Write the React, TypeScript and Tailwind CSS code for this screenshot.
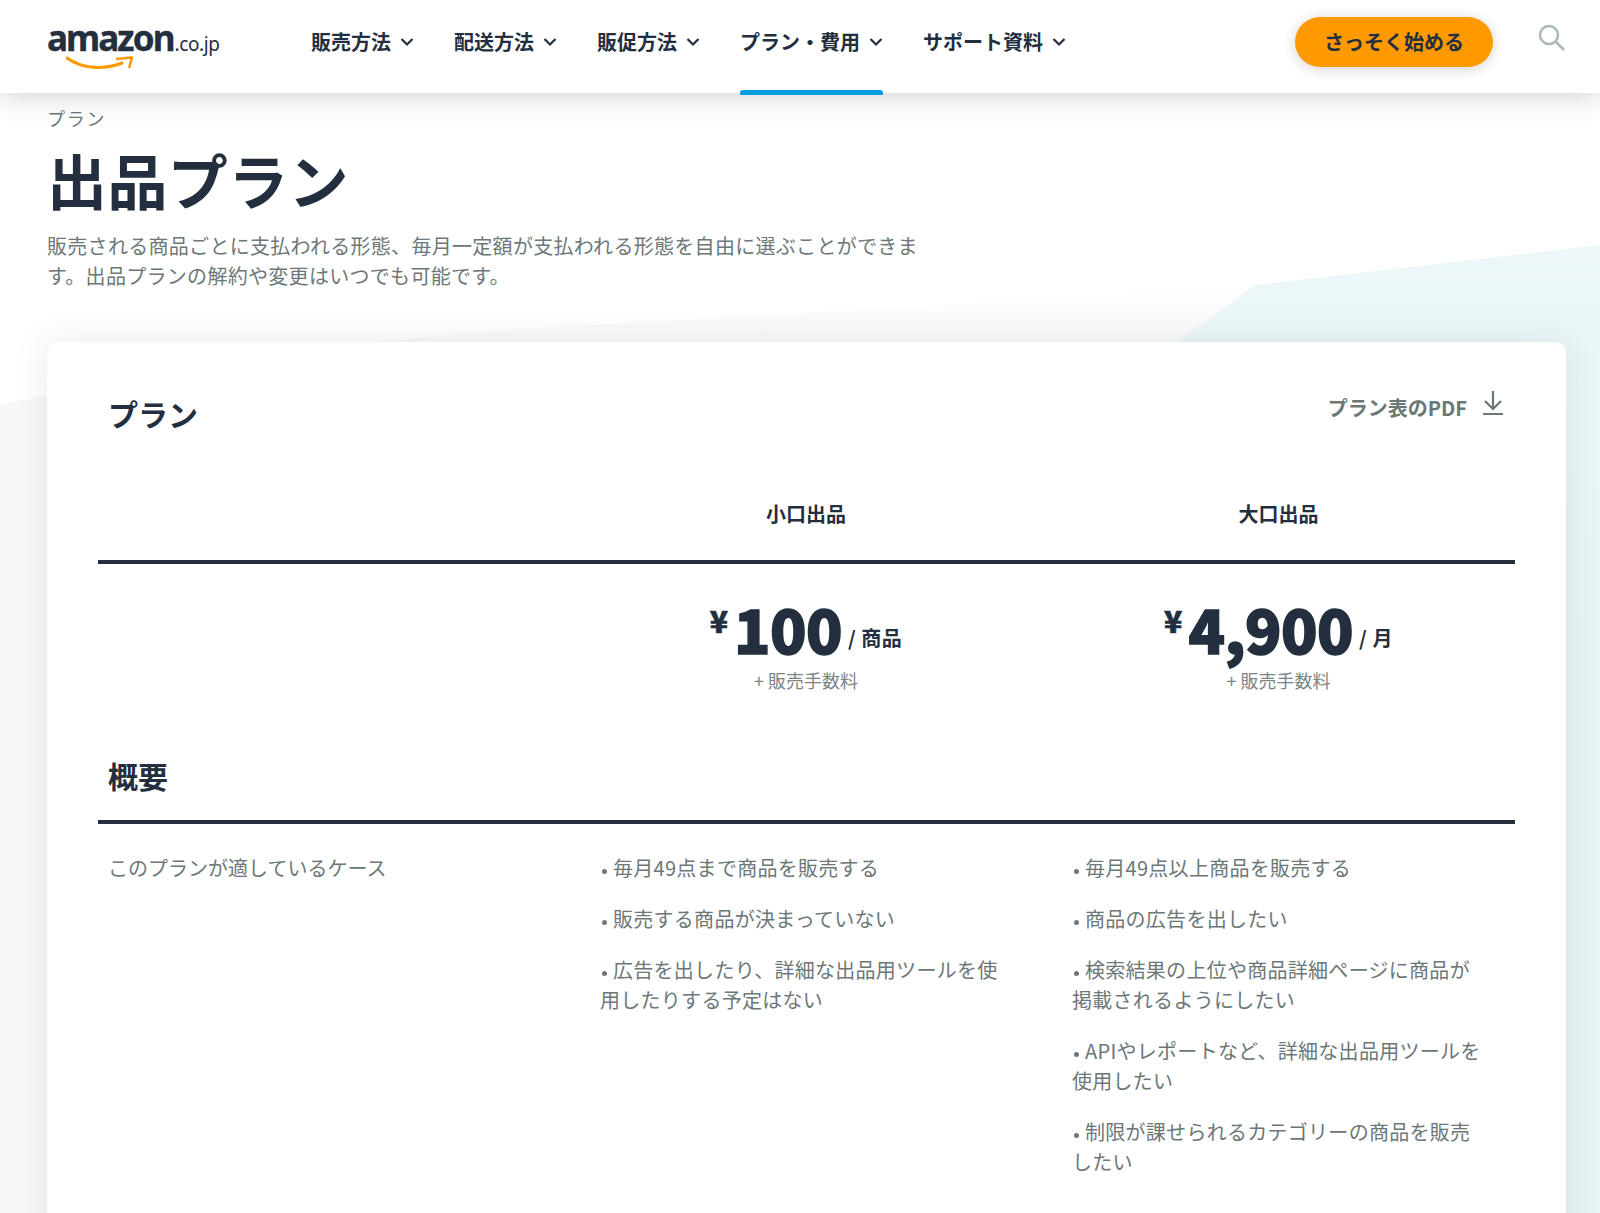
const navItems = ['販売方法', '配送方法', '販促方法', 'プラン・費用', 'サポート資料']

const smallItems = [
  '毎月49点まで商品を販売する',
  '販売する商品が決まっていない',
  '広告を出したり、詳細な出品用ツールを使用したりする予定はない',
]

const largeItems = [
  '毎月49点以上商品を販売する',
  '商品の広告を出したい',
  '検索結果の上位や商品詳細ページに商品が掲載されるようにしたい',
  'APIやレポートなど、詳細な出品用ツールを使用したい',
  '制限が課せられるカテゴリーの商品を販売したい',
]

function Logo() {
  return (
    <div className="relative flex items-baseline w-[175px] h-[60px] -mt-[8px] text-[#232f3e]">
      <span className="font-['Noto_Sans',sans-serif] text-[35px] leading-[50px] font-bold tracking-[-1.9px] [-webkit-text-stroke:0.4px_#232f3e]">amazon</span>
      <span className="font-['Noto_Sans',sans-serif] text-[19px] leading-[50px] tracking-[-0.4px] ml-[1px]">.co.jp</span>
      <svg className="absolute left-[19px] top-[43px]" width="72" height="20" viewBox="0 0 72 20" fill="none">
        <path d="M1 2C16 13 38 14 56 7" stroke="#ff9900" strokeWidth="3" strokeLinecap="round" />
        <path d="M50 3L66 1.500L63 12" stroke="#ff9900" strokeWidth="2.500" strokeLinejoin="round" />
      </svg>
    </div>
  )
}

function Header() {
  return (
    <header className="relative z-20 flex items-center h-[93px] bg-white pl-[47px] shadow-[0_2px_28px_rgba(0,0,0,0.2)]">
      <Logo />
      <nav className="flex ml-[89px] gap-[40px] h-full">
        {navItems.map(item => (
          <div key={item} className="relative flex items-center gap-[9px] h-full pb-[10px] text-[20px] font-bold text-[#232f3e]">
            {item}
            <svg width="14" height="10" viewBox="0 0 14 10" fill="none" stroke="currentColor" strokeWidth="2.200" className="mt-[1px]">
              <path d="M1.500 2L7 7.500L12.500 2" />
            </svg>
            {item === 'プラン・費用' && (
              <div className="absolute left-0 right-0 -bottom-[2px] h-[5px] rounded-t-[3px] rounded-b-[1px] bg-[#00a0e0]" />
            )}
          </div>
        ))}
      </nav>
      <button className="ml-auto w-[198px] h-[50px] -mt-[9px] rounded-full bg-[#ff9900] text-[20px] font-bold text-[#232f3e] shadow-[0_2px_14px_rgba(0,0,0,0.18)]">
        さっそく始める
      </button>
      <svg className="ml-[45px] mr-[35px] -mt-[19px]" width="27" height="27" viewBox="0 0 27 27" fill="none" stroke="#a9b8b9" strokeWidth="2.500">
        <circle cx="11" cy="11" r="9" />
        <path d="M17.500 17.500L26 26" />
      </svg>
    </header>
  )
}

function BulletList({ items }: { items: string[] }) {
  return (
    <ul className="flex flex-col gap-[21px] px-[30px] tracking-[0.28px]">
      {items.map(item => (
        <li key={item}>
          <span className="inline-block w-[5px] h-[5px] ml-[2px] mr-[6px] mb-[2px] rounded-full bg-[#6c7778]" />
          {item}
        </li>
      ))}
    </ul>
  )
}

function Price({ amount, unit }: { amount: string; unit: string }) {
  return (
    <div className="flex flex-col items-center">
      <div className="flex items-baseline text-[#232f3e] h-[74px] pt-[5px]">
        <span className="text-[30px] leading-[36px] font-black self-start mt-[4px] mr-[6px] [-webkit-text-stroke:0.6px_#232f3e]">¥</span>
        <span className="text-[60px] leading-[60px] font-black tracking-[-0.5px] [-webkit-text-stroke:1.5px_#232f3e]">{amount}</span>
        <span className="text-[20px] leading-[24px] font-bold ml-[6px] tracking-[0.5px] -translate-y-[8px]">/ {unit}</span>
      </div>
      <div className="text-[18px] leading-[26px] text-[#7a8586]">+ 販売手数料</div>
    </div>
  )
}

export default function App() {
  return (
    <div className="relative h-[1213px] overflow-hidden bg-white font-['Noto_Sans_CJK_JP','Noto_Sans',sans-serif]">
      <Header />

      {/* background shapes behind the card */}
      <svg className="absolute left-0 top-0 z-0" width="1600" height="1213" viewBox="0 0 1600 1213">
        <defs>
          <linearGradient id="grayFade" gradientUnits="userSpaceOnUse" x1="0" y1="285" x2="0" y2="345">
            <stop offset="0" stopColor="#ffffff" />
            <stop offset="1" stopColor="#f8f8f8" />
          </linearGradient>
          <linearGradient id="blueFade" gradientUnits="userSpaceOnUse" x1="0" y1="245" x2="0" y2="1213">
            <stop offset="0" stopColor="#edf7f9" />
            <stop offset="0.4" stopColor="#e9f4f6" />
            <stop offset="1" stopColor="#e8f4f6" />
          </linearGradient>
        </defs>
        <polygon points="0,405 47,395 376,342 500,330 1100,296 1255,285 1255,1213 0,1213" fill="url(#grayFade)" />
        <polygon points="1177,342 1255,285 1600,245 1600,1213 1177,1213" fill="url(#blueFade)" />
      </svg>

      <main className="relative z-10 px-[47px]">
        <div className="pt-[13px] text-[18px] leading-[24px] tracking-[1.7px] text-[#6c7778]">プラン</div>
        <h1 className="mt-[13px] text-[60px] leading-[72px] font-bold tracking-[0.4px] text-[#232f3e]">出品プラン</h1>
        <p className="mt-[16px] w-[880px] text-[20px] leading-[30px] tracking-[0.3px] text-[#6c7778]">
          販売される商品ごとに支払われる形態、毎月一定額が支払われる形態を自由に選ぶことができます。出品プランの解約や変更はいつでも可能です。
        </p>

        <section className="mt-[51px] h-[1000px] w-[1519px] rounded-[10px] bg-white px-[51px] shadow-[0_0_36px_rgba(35,47,62,0.1)]">
          <div className="flex justify-between pt-[51px] pl-[10px] pr-[11px]">
            <h2 className="text-[30px] leading-[40px] font-bold text-[#232f3e]">プラン</h2>
            <div className="flex items-start gap-[15px] text-[20px] leading-[30px] font-bold text-[#6c7778]">
              <span>プラン表のPDF</span>
              <svg className="-mt-[3px]" width="22" height="26" viewBox="0 0 22 26" fill="none" stroke="currentColor" strokeWidth="2.200">
                <path d="M11 1V18M3 11L11 19L19 11M1 24H21" />
              </svg>
            </div>
          </div>

          <div className="grid grid-cols-[472px_472px_473px] mt-[66px] border-b-[4px] border-[#232f3e] text-[20px] font-bold text-[#232f3e] text-center leading-[30px] pb-[31px]">
            <div />
            <div>小口出品</div>
            <div>大口出品</div>
          </div>

          <div className="grid grid-cols-[472px_472px_473px] pt-[29px]">
            <div />
            <Price amount="100" unit="商品" />
            <Price amount="4,900" unit="月" />
          </div>

          <div className="mt-[60px] pl-[10px] pb-[23px] border-b-[4px] border-[#232f3e] text-[30px] leading-[44px] font-bold text-[#232f3e]">概要</div>

          <div className="grid grid-cols-[472px_472px_473px] pt-[29px] text-[20px] leading-[30px] text-[#6c7778]">
            <div className="pl-[10px]">このプランが適しているケース</div>
            <BulletList items={smallItems} />
            <BulletList items={largeItems} />
          </div>
        </section>
      </main>
    </div>
  )
}
